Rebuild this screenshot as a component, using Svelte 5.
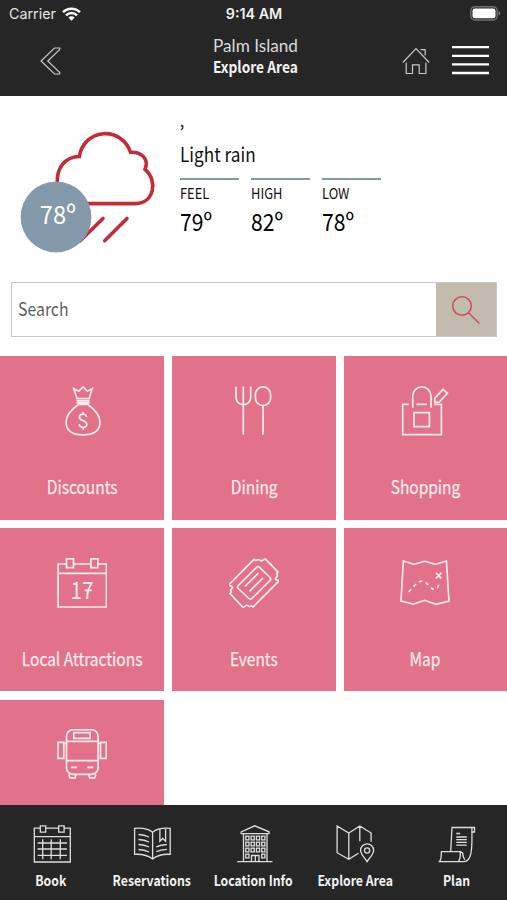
<script>
  const readings = [
    { label: 'FEEL', value: '79º' },
    { label: 'HIGH', value: '82º' },
    { label: 'LOW', value: '78º' }
  ];
  const tiles = ['Discounts', 'Dining', 'Shopping', 'Local Attractions', 'Events', 'Map', 'Transport'];
  const tabs = ['Book', 'Reservations', 'Location Info', 'Explore Area', 'Plan'];
  const rows = [13, 19, 25, 31];
  const cols = [13.4, 18.7, 24, 29.3];
</script>

{#snippet tileIcon(name)}
  <svg class="tile-icon" viewBox="0 0 50 50">
    {#if name === 'Discounts'}
      <path d="M20.1 12.7 16.8 2.7 21.8 5.3 26.1.8 30.3 5.3 35.1 2.7 32.1 12.7ZM19.6 14.9h13M19.6 16.9h13M21.5 18.5H30.8C37 23 43 29 43 36c0 8-5 12.9-17 12.9S9.1 44 9.1 36C9.1 29 15 23 21.5 18.5Z" />
      <path d="M29.7 31.2c-.4-2-1.700-3-3.600-3-2.200 0-3.700 1.200-3.700 3.100 0 4.600 7.400 2.300 7.400 6.900 0 2-1.600 3.200-3.700 3.200-2.200 0-3.700-1.200-4-3.200M26.100 25.800v2.400M26.100 41.400v2.400" />
    {:else if name === 'Dining'}
      <path d="M7 .5V11.500a7.350 7.350 0 0 0 14.700 0V.5M14.300.5V48.800M34 19.500V48.800" />
      <rect x="26.400" y=".8" width="15.200" height="18.700" rx="7.600" />
    {:else if name === 'Shopping'}
      <path d="M8.700 18.300H2.700V48.700H41.400V18.300H34.400M16.400 18.300H27M12.700 21.700V10a9.150 9.150 0 0 1 18.300 0V21.700M14 26.700H29.400V40.700H14ZM43 3.300 47.400 7.300 39.400 16 34.700 16.300V12.300Z" />
    {:else if name === 'Local Attractions'}
      <path d="M9.500 6H1.100V49H49.500V6H41.100M16.500 6H33.800M1.100 15.300H49.500M9.500.8h7v8.900h-7ZM33.900.8h7v8.900h-7ZM27.700 32.400h7" />
      <text class="date" x="13.500" y="41.200" textLength="23" lengthAdjust="spacingAndGlyphs">17</text>
    {:else if name === 'Events'}
      <path d="M1 25.600 25 1.300q1.500 1.700 3 .8t3 .2 3-.2 2.700-.8L49 14q-2 1.400-.9 2.500t-.9 3 1 2.500.8 2L24 49q-1.300-1.800-2.700-.9t-2.500-.3-2.500.2-2.600 1L1 35.600q2-1.200 1-2.400t.8-2.600-.9-2.500-.9-2.500Z" />
      <path d="M9.300 27.500 27.500 9.300q1.500-1.500 3 0L41 19.500q1.500 1.500 0 3L22.800 40.500q-1.500 1.500-3 0L9.300 30.500q-1.500-1.500 0-3ZM16 28.300 29.500 15M20.500 33.300 34 20" />
    {:else if name === 'Map'}
      <path d="M3.400 3 14 6.300 24.700 3.300 35.400 6.300 46.400 3 49 43 36 46.300 24.700 42.300 13.400 46 1 43ZM36 14.800l5.400 5.600M41.400 14.800 36 20.400" />
      <path stroke-dasharray="3.600 3.600" d="M8.700 34C14 28 18 23 22 23c5 0 8 8.300 12.400 8.300 3 0 4.500-4 5-8" />
    {:else}
      <rect x="9.500" y=".7" width="31.600" height="44.600" rx="6.500" />
      <path d="M9.500 12.400H41.100M9.500 31.700H41.100M16.800 3.700H33.100V9.300H16.800ZM1 13.300H6.800V29.300H1ZM43.500 13.300H49.300V29.300H43.500ZM6.800 14.500H9.500M41.100 14.500H43.500M14.100 38.300h6M30.300 38.300h6M11.800 45.300l1.200 3.600h5l1.100-3.600M31.500 45.300l1.200 3.600h5l1.100-3.600" />
    {/if}
  </svg>
{/snippet}

{#snippet tabIcon(name)}
  <svg class="tab-icon" viewBox="0 0 40 40">
    {#if name === 'Book'}
      <path d="M9.300 3.200H3.300V37H39.300V3.200H33.300M14.700 3.200H27.600M3.300 11.700H39.300M9.300.8h5.400v6.400H9.300ZM27.700.8h5.400v6.400h-5.400ZM11.700 14.300v20M20.200 14.300v20M29.300 14.300v20M6.600 18H36M6.600 24H36M6.600 30.300H36" />
    {:else if name === 'Reservations'}
      <path d="M20.600 7.200C16 3.500 9 2.800 2.600 3.300V29.300c7-.4 13 .7 18 4.700 5-4 11-5.100 17.600-4.700V3.300C32 2.800 25 3.500 20.600 7.200V34M27.900 4V16.300l2.800-2.800 2.900 2.800V3.600" />
      <path d="M6.500 9.500q6 .2 10.500 2.500M6.500 14.500q6 .2 10.500 2.500M6.500 19.500q6 .2 10.500 2.500M6.500 24.500q6 .2 10.500 2.500M24.300 21.800q4.500-2 10.500-2.300M24.300 26.700q4.500-2 10.500-2.300" />
    {:else if name === 'Location Info'}
      <path d="M7.200 8.600V6.800L20.700.8 35 6.800V8.600ZM9.500 8.600V36.700M33 8.600V36.700M3.200 36.700H38.500" />
      {#each rows as y, r}
        {#each cols as x, c}
          {#if r < 3 || c === 0 || c === 3}
            <rect x={x - 1.6} y={y - 1.8} width="3.200" height="3.700" />
          {/if}
        {/each}
      {/each}
      <path d="M17.500 36.700V30.500H25V36.700M21.300 30.500V36.700" />
    {:else if name === 'Explore Area'}
      <path d="M36.100 16.700V8L24.800 1 13.800 8 2.100 1V27.700L13.800 34.300 23.400 28.300M13.800 8V34.300M24.800 1V16.300M32.100 36.700C29 32 25.600 29 25.600 25.400a6.500 6.500 0 0 1 13 0C38.600 29 35.200 32 32.100 36.700Z" />
      <circle cx="32.100" cy="25.500" r="2.600" />
    {:else}
      <path d="M14.700 26.500 16 2.500H38.500V7H35.900V3M35.900 7C36 16 36.500 25 34 31.500c-1.300 3.500-3 5.200-6.500 5.200H3.400C5.500 34 5.400 30 5.400 26.700H24.200C24.500 30 24 34 22.500 36.500M24.200 26.700l2.400 1.200c.3 3 .4 5 2.400 6.500" />
      <path d="M20.300 8.500h3.800M20.300 12h10.500M20.300 14.700h10.500M20.300 17.400h10.500M20.300 20.100h10.500" />
    {/if}
  </svg>
{/snippet}

<div class="app">
  <header>
    <div class="status">
      <div class="carrier">
        <b>Carrier</b>
        <svg width="19" height="14" viewBox="0 0 19 14">
          <path d="M1 5.200a12 12 0 0 1 17 0M4 8.300a7.900 7.900 0 0 1 11 0" fill="none" stroke="#fff" stroke-width="2.500" />
          <path d="M9.500 13.800 6.400 10.500a4.400 4.400 0 0 1 6.200 0Z" fill="#fff" />
        </svg>
      </div>
      <b class="clock">9:14 AM</b>
      <svg class="battery" width="31" height="15" viewBox="0 0 31 15">
        <rect x=".8" y=".8" width="26.400" height="13.200" rx="4" fill="none" stroke="#707070" stroke-width="1.400" />
        <rect x="2.500" y="2.500" width="23" height="9.800" rx="2.300" fill="#fff" />
        <path d="M28.600 5v4.600q1.700-.6 1.700-2.300T28.600 5Z" fill="#777" />
      </svg>
    </div>
    <div class="bar">
      <svg class="back" width="22" height="28" viewBox="0 0 22 28">
        <path d="M14.500 1h5.200v1.500L7.800 14l11.900 11.500V27h-5.200L1 14Z" />
      </svg>
      <div class="titles">
        <div class="place">Palm Island</div>
        <div class="page"><span>Explore Area</span></div>
      </div>
      <div class="actions">
        <svg class="home" width="28" height="28" viewBox="0 0 28 28">
          <path d="M.8 15.500 14 1.500 27.200 15.500M4.200 15.500V26.500H10.500V17.800H17.200V26.500H23.900V15.500M18.500 2.700H23.200V8.500" />
        </svg>
        <svg class="menu" width="37" height="30" viewBox="0 0 37 30">
          <path d="M0 2.200H37M0 10.800H37M0 19.400H37M0 28H37" />
        </svg>
      </div>
    </div>
  </header>

  <main>
    <section class="weather">
      <svg class="sky" width="136" height="124" viewBox="20 130 136 124">
        <g fill="none" stroke="#c22b38" stroke-width="3.600">
          <path d="M57.300 183C56.500 168 65 156.700 79.400 156.500A26.200 26.200 0 0 1 130.500 152.300C141 151.500 149.500 159 145 169.300 158 180 154.500 203.600 135.500 203.600H80" />
          <path stroke-linecap="round" d="M103 218.500 80 241M127 218.500 104.700 240.700" />
        </g>
        <circle cx="56" cy="217" r="35.400" fill="#8499a9" />
        <text class="now" x="39.800" y="223.700" textLength="36" lengthAdjust="spacingAndGlyphs">78º</text>
      </svg>
      <div class="report">
        <div class="spot"><span>,</span></div>
        <div class="sum"><span>Light rain</span></div>
        <div class="readings">
          {#each readings as r}
            <div class="reading">
              <div class="rlabel"><span>{r.label}</span></div>
              <div class="rvalue"><span>{r.value}</span></div>
            </div>
          {/each}
        </div>
      </div>
    </section>

    <div class="search">
      <div class="field"><span>Search</span></div>
      <div class="go">
        <svg width="30" height="30" viewBox="0 0 30 30">
          <circle cx="11" cy="11" r="9.300" />
          <path d="M17.600 17.800 28.300 28.500" />
        </svg>
      </div>
    </div>

    <div class="grid">
      {#each tiles as t, i}
        <div class="tile">
          {@render tileIcon(t)}
          {#if i < 6}<div class="tlabel"><span>{t}</span></div>{/if}
        </div>
      {/each}
    </div>
  </main>

  <nav>
    {#each tabs as t}
      <div class="tab">
        {@render tabIcon(t)}
        <div class="nlabel"><span>{t}</span></div>
      </div>
    {/each}
  </nav>
</div>

<style>
  .app {
    width: 507px;
    height: 900px;
    display: flex;
    flex-direction: column;
    overflow: hidden;
    background: #fff;
    color: #111;
    font-family: "Noto Sans CJK JP", "Noto Sans CJK SC", "Noto Sans", sans-serif;
    white-space: nowrap;
  }
  svg { display: block; flex: none; }

  /* Condensed lettering */
  span { display: inline-block; transform: scaleX(0.86); }
  .report span, .field span { transform-origin: left; }

  header { height: 96px; flex: none; background: #262626; color: #f2f2f2; }
  .status {
    height: 27px;
    display: grid;
    grid-template-columns: 1fr auto 1fr;
    align-items: center;
    padding: 0 6px 0 7px;
    font-family: Inter, Roboto, sans-serif;
    font-size: 14.300px;
    color: #e4e4e4;
  }
  .carrier { display: flex; align-items: center; gap: 6px; padding-left: 2px; }
  .carrier b { font-weight: 400; }
  .clock { font-weight: 600; color: #f0f0f0; }
  .battery { justify-self: end; }
  .bar {
    height: 69px;
    display: grid;
    grid-template-columns: 1fr auto 1fr;
    padding: 0 18px;
  }
  .back { margin: 20px 0 0 22px; fill: none; stroke: #c9c9c9; stroke-width: 1.200; }
  .titles { text-align: center; padding-top: 8px; margin-left: 4px; }
  .place { font-family: Lato, sans-serif; font-size: 17.200px; line-height: 21px; color: #dadada; }
  .page { font-size: 16px; line-height: 21px; font-weight: 700; }
  .actions { display: flex; justify-content: flex-end; gap: 22px; padding-top: 18px; }
  .home { margin-top: 2px; fill: none; stroke: #c9c9c9; stroke-width: 1.200; }
  .menu { fill: none; stroke: #fff; stroke-width: 2.300; }

  main { flex: 1; min-height: 0; overflow: hidden; }
  .weather { display: flex; height: 186px; }
  .sky { margin: 34px 0 0 20px; }
  .now { font-size: 25px; fill: #fff; }
  .report { padding: 11px 0 0 24px; }
  .spot { font-size: 16px; line-height: 26px; font-weight: 500; }
  .sum { font-size: 20px; line-height: 34px; margin-top: 4px; }
  .readings { display: flex; gap: 12px; margin-top: 7px; }
  .reading { width: 59px; border-top: 2.500px solid #8499a9; }
  .rlabel { font-size: 15px; line-height: 26px; }
  .rvalue { font-size: 24px; line-height: 29px; color: #000; }
  .rvalue span { transform: scaleX(0.88); }

  .search {
    display: flex;
    box-sizing: border-box;
    height: 55px;
    margin: 0 10px 19.300px 11px;
    border: 1.500px solid #c9c8c0;
  }
  .field { flex: 1; padding-left: 6px; font-size: 18px; line-height: 50px; color: #5f5f5f; }
  .field span { transform: scaleX(0.88); }
  .go { width: 60px; background: #c2bbae; display: flex; align-items: center; justify-content: center; }
  .go svg { fill: none; stroke: #c8505f; stroke-width: 1.600; }

  .grid {
    display: grid;
    grid-template-columns: 164.300px 163.400px 163.300px;
    grid-auto-rows: 163.400px;
    gap: 8.300px 8px;
  }
  .tile { background: #e2728a; display: flex; flex-direction: column; align-items: center; padding-top: 29.700px; box-sizing: border-box; }
  .tile-icon { width: 50px; height: 50px; fill: none; stroke: #fdeaee; stroke-width: 1.700; }
  .date { font-size: 24px; font-weight: 400; fill: #fdeaee; stroke: none; }
  .tlabel { margin-top: 37px; font-size: 18px; line-height: 26px; color: #fdeaee; -webkit-text-stroke: 0.25px #fdeaee; }

  nav { height: 95px; flex: none; display: flex; background: #262626; }
  .tab { flex: 1 1 0; display: flex; flex-direction: column; align-items: center; padding-top: 20px; }
  .tab-icon { width: 40px; height: 40px; fill: none; stroke: #dedede; stroke-width: 1.300; }
  .nlabel { margin-top: 4px; font-size: 14px; line-height: 22px; font-weight: 700; color: #f2f2f2; }
  .nlabel span { transform: scaleX(0.875); }
</style>
